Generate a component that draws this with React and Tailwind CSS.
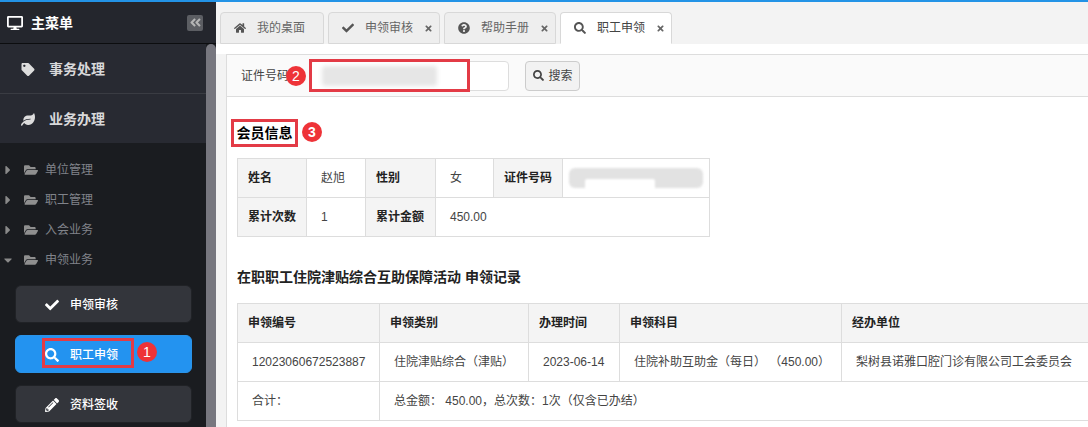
import React from "react";
import { FaDesktop, FaTag, FaLeaf, FaFolderOpen, FaCaretRight, FaCaretDown, FaCheck, FaSearch, FaPencilAlt, FaHome, FaQuestionCircle, FaTimes, FaAngleDoubleLeft } from "react-icons/fa";

const font = { fontFamily: '"Liberation Sans","Noto Sans CJK SC",sans-serif' };

function Badge({ n, className }) {
  return <span className={"absolute flex h-[20px] w-[20px] items-center justify-center rounded-full bg-[#ee3338] text-[14px] leading-none text-white " + className}>{n}</span>;
}

function Folder({ label, open }) {
  const Caret = open ? FaCaretDown : FaCaretRight;
  return (
    <div className="flex h-[30px] items-center pl-[4px] text-[12px] text-[#80838a]">
      <Caret className="w-[8px] text-[14px] text-[#8a8a8a]" />
      <FaFolderOpen className="ml-[12px] text-[14px] text-[#8f8f8f]" />
      <span className="ml-[7px]">{label}</span>
    </div>
  );
}

function SideButton({ icon, label, active, children }) {
  return (
    <div className={"relative ml-[15px] mr-[14px] flex h-[38px] items-center rounded-[6px] border pl-[29px] pt-[1px] text-[12px] font-medium text-white " + (active ? "border-[#2a93e8] bg-[#2393f0]" : "border-[#202226] bg-[#33353b]")}>
      <span className="flex w-[14px] justify-center text-[14px]">{icon}</span>
      <span className="ml-[11px]">{label}</span>
      {children}
    </div>
  );
}

function Tab({ icon, label, active, close = true, w }) {
  return (
    <div className={"flex h-[32px] items-center rounded-t-[4px] border border-[#d8d8d8] pl-[12px] pr-[6px] text-[12px] " + (active ? "border-b-white bg-white text-[#444]" : "bg-[#eeeeee] text-[#666]") + " " + w}>
      <span className="flex w-[14px] justify-center text-[12px] text-[#555]">{icon}</span>
      <span className="ml-[10px]">{label}</span>
      {close && <FaTimes className="ml-auto text-[9px] text-[#666]" />}
    </div>
  );
}

const th = "border border-[#dddddd] bg-[#f4f4f4] px-[10px] text-left text-[12px] font-bold text-[#222]";
const td = "border border-[#dddddd] px-[14px] text-left text-[12px] font-normal text-[#444]";

export default function App() {
  return (
    <div className="flex h-[427px] w-[1088px] flex-col overflow-hidden bg-white" style={font}>
      <div className="h-[2px] shrink-0 bg-[#2393e6]" />
      <div className="flex min-h-0 flex-1">
        <aside className="flex w-[216px] shrink-0 flex-col bg-[#1a1c20]">
          <div className="flex h-[42px] shrink-0 items-center border-b border-[#0c0d0f] bg-[#24262d] pl-[7px] pr-[13px] text-white">
            <FaDesktop className="mt-[1px] text-[16px]" />
            <span className="ml-[8px] mt-[1px] text-[14px] font-bold">主菜单</span>
            <span className="ml-auto flex h-[16px] w-[16px] items-center justify-center rounded-[2px] bg-[#5c5e63] text-[13px] text-[#b5b5b5]"><FaAngleDoubleLeft /></span>
          </div>
          <div className="flex min-h-0 flex-1">
            <div className="min-w-0 flex-1">
              <div className="flex h-[50px] items-center border-b border-[#3a3c43] bg-[#282a32] pl-[21px] pt-[2px] text-[14px] font-bold text-[#d8d8da]">
                <FaTag className="w-[14px] text-[13px] text-[#dddddd]" /><span className="ml-[14px]">事务处理</span>
              </div>
              <div className="flex h-[49px] items-center bg-[#282a32] pl-[21px] pt-[2px] text-[14px] font-bold text-[#d8d8da]">
                <FaLeaf className="w-[14px] text-[13px] text-[#dddddd]" /><span className="ml-[14px]">业务办理</span>
              </div>
              <div className="pt-[12px]">
                <Folder label="单位管理" />
                <Folder label="职工管理" />
                <Folder label="入会业务" />
                <Folder label="申领业务" open />
              </div>
              <div className="mt-[10px] flex flex-col gap-[12px]">
                <SideButton icon={<FaCheck />} label="申领审核" />
                <SideButton icon={<FaSearch />} label="职工申领" active>
                  <span className="absolute left-[26px] top-[2px] h-[30px] w-[92px] border-[3px] border-[#e33b46]" />
                  <Badge n="1" className="left-[121px] top-[6px]" />
                </SideButton>
                <SideButton icon={<FaPencilAlt />} label="资料签收" />
              </div>
            </div>
            <div className="w-[10px] shrink-0 rounded-t-[5px] bg-[#77777f]" />
          </div>
        </aside>
        <main className="flex min-w-0 flex-1 flex-col bg-[#f3f3f3]">
          <div className="flex h-[42px] shrink-0 items-end gap-[4px] pl-[4px]">
            <Tab icon={<FaHome />} label="我的桌面" close={false} w="w-[104px]" />
            <Tab icon={<FaCheck />} label="申领审核" w="w-[112px]" />
            <Tab icon={<FaQuestionCircle />} label="帮助手册" w="w-[112px]" />
            <Tab icon={<FaSearch />} label="职工申领" active w="w-[112px]" />
          </div>
          <div className="h-[10px] shrink-0 bg-white" />
          <div className="ml-[10px] flex min-h-0 flex-1 flex-col border-l border-t border-[#dddddd] bg-white">
            <div className="relative flex h-[42px] shrink-0 items-center border-b border-[#dddddd] bg-[#fafafa] pl-[14px] text-[12px] text-[#444]">
              <span>证件号码</span>
              <div className="ml-[20px] h-[30px] w-[200px] rounded-[4px] border border-[#dddddd] bg-white" />
              <button className="ml-[16px] flex h-[30px] w-[55px] items-center justify-center gap-[5px] rounded-[4px] border border-[#cccccc] bg-[#f2f2f2] text-[12px] text-[#444]"><FaSearch className="text-[11px]" />搜索</button>
              <span className="absolute left-[95px] top-[11px] h-[20px] w-[115px] rounded-[3px] bg-[#e6e6e6] blur-[2px]" />
              <Badge n="2" className="left-[59px] top-[11px]" />
              <span className="absolute left-[82px] top-[4px] h-[33px] w-[161px] border-[3px] border-[#e33b46]" />
            </div>
            <div className="min-h-0 flex-1 pl-[10px]">
              <div className="relative mt-[22px] flex h-[28px] items-center text-[14px] font-bold text-black">
                <span className="-ml-[6px] flex h-[28px] w-[67px] items-center justify-center border-[3px] border-[#e33b46]">会员信息</span>
                <Badge n="3" className="left-[65px] top-[3px]" />
              </div>
              <table className="mt-[11px] w-[472px] table-fixed border-collapse">
                <colgroup>
                  <col className="w-[69px]" /><col className="w-[59px]" /><col className="w-[70px]" /><col className="w-[58px]" /><col className="w-[69px]" /><col className="w-[147px]" />
                </colgroup>
                <tbody>
                  <tr className="h-[39px]">
                    <th className={th}>姓名</th><td className={td}>赵旭</td><th className={th}>性别</th><td className={td}>女</td><th className={th}>证件号码</th>
                    <td className="relative overflow-hidden border border-[#dddddd]">
                      <span className="absolute left-[6px] top-[9px] h-[20px] w-[134px] rounded-[6px] bg-[#e2e2e2] blur-[1px]" />
                      <span className="absolute left-[22px] top-[20px] h-[12px] w-[70px] rounded-[2px] bg-white blur-[1px]" />
                    </td>
                  </tr>
                  <tr className="h-[39px]">
                    <th className={th}>累计次数</th><td className={td}>1</td><th className={th}>累计金额</th><td colSpan={3} className={td}>450.00</td>
                  </tr>
                </tbody>
              </table>
              <h3 className="mt-[30px] text-[14px] font-bold leading-[20px] text-[#222]">在职职工住院津贴综合互助保障活动 申领记录</h3>
              <table className="mt-[16px] w-[851px] table-fixed border-collapse">
                <colgroup>
                  <col className="w-[142px]" /><col className="w-[149px]" /><col className="w-[91px]" /><col className="w-[222px]" /><col className="w-[247px]" />
                </colgroup>
                <tbody>
                  <tr className="h-[39px]">
                    <th className={th}>申领编号</th><th className={th}>申领类别</th><th className={th}>办理时间</th><th className={th}>申领科目</th><th className={th}>经办单位</th>
                  </tr>
                  <tr className="h-[39px]">
                    <td className={td}>12023060672523887</td><td className={td}>住院津贴综合（津贴）</td><td className={td}>2023-06-14</td><td className={td + " whitespace-nowrap"}>住院补助互助金（每日） （450.00）</td><td className={td + " whitespace-nowrap"}>梨树县诺雅口腔门诊有限公司工会委员会</td>
                  </tr>
                  <tr className="h-[39px]">
                    <td className={td}>合计：</td><td colSpan={4} className={td}>总金额： 450.00，总次数：1次（仅含已办结）</td>
                  </tr>
                </tbody>
              </table>
            </div>
          </div>
        </main>
      </div>
    </div>
  );
}
